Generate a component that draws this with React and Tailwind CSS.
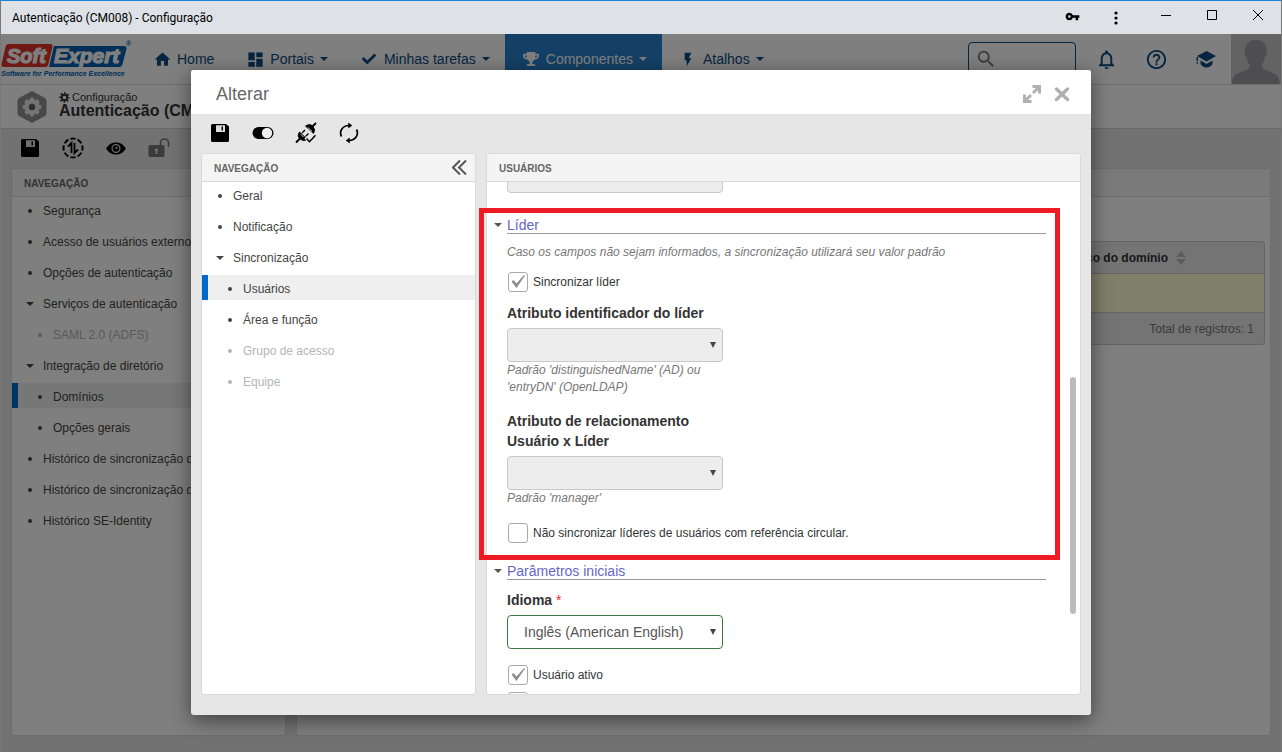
import React, { useState } from 'react';
import { MdVpnKey, MdHome, MdDashboard, MdNotificationsNone, MdHelpOutline, MdSearch, MdFlashOn } from 'react-icons/md';
import { FaCheck, FaTrophy } from 'react-icons/fa';

const pageNav = [
  { label: 'Segurança' },
  { label: 'Acesso de usuários externos' },
  { label: 'Opções de autenticação' },
  { label: 'Serviços de autenticação', open: true },
  { label: 'SAML 2.0 (ADFS)', child: true, disabled: true },
  { label: 'Integração de diretório', open: true },
  { label: 'Domínios', child: true, active: true },
  { label: 'Opções gerais', child: true },
  { label: 'Histórico de sincronização de usuários' },
  { label: 'Histórico de sincronização de domínios' },
  { label: 'Histórico SE-Identity' },
];

const modalNav = [
  { label: 'Geral' },
  { label: 'Notificação' },
  { label: 'Sincronização', open: true },
  { label: 'Usuários', child: true, active: true },
  { label: 'Área e função', child: true },
  { label: 'Grupo de acesso', child: true, disabled: true },
  { label: 'Equipe', child: true, disabled: true },
];

const Caret = ({ className = '' }) => (
  <svg viewBox="0 0 8 4" className={`h-1 w-2 shrink-0 ${className}`} fill="currentColor">
    <path d="M0 0h8L4 4z" />
  </svg>
);

const Gear = ({ className }) => (
  <svg viewBox="0 0 24 24" className={className} fill="none" stroke="currentColor">
    <circle cx="12" cy="12" r="6" strokeWidth="4" />
    <circle cx="12" cy="12" r="9.5" strokeWidth="4" pathLength="16" strokeDasharray="1 1" strokeDashoffset="0.5" />
  </svg>
);

const SaveIcon = () => (
  <svg viewBox="0 0 18 18" className="h-[18px] w-[18px]">
    <path fill="currentColor" d="M1.500 0h13.500l3 2.500v14q0 1.500-1.500 1.500h-15Q0 18 0 16.500v-15Q0 0 1.500 0z" />
    <path fill="#ddd" d="M5 1.200h9V8H5z" />
    <path fill="currentColor" d="M10.500 2.500H12v4h-1.500z" />
    <path fill="currentColor" d="M15 1.500h.8l1.200 1V8h-2z" opacity="0.800" />
  </svg>
);

const SyncIcon = () => (
  <svg viewBox="0 0 22 22" className="h-[22px] w-[22px]" fill="none" stroke="currentColor">
    <circle cx="11" cy="11" r="9.500" strokeWidth="2" pathLength="80" strokeDasharray="7 3" strokeDashoffset="3.500" />
    <path d="M9.500 16V6L6 9.500M12.500 6v10l3.500-3.500" strokeWidth="1.800" />
  </svg>
);

const EyeIcon = () => (
  <svg viewBox="0 0 20 13" className="h-[13px] w-5">
    <path fill="currentColor" fillRule="evenodd" d="M0 6.500C3 2 6 .500 10 .500s7 1.500 10 6c-3 4.500-6 6-10 6s-7-1.500-10-6zM10 2a4.500 4.500 0 100 9 4.500 4.500 0 000-9z" />
    <circle cx="10" cy="6.500" r="3.300" fill="currentColor" />
    <circle cx="10.500" cy="5.800" r="1.100" fill="#ddd" />
  </svg>
);

const UnlockIcon = () => (
  <svg viewBox="0 0 22 20" className="h-5 w-[22px] text-[#777]">
    <path fill="none" stroke="currentColor" strokeWidth="1.600" d="M12.500 8V5a4 4 0 018 0v4" />
    <path fill="currentColor" fillRule="evenodd" d="M2 7h13q1.500 0 1.500 1.500v9q0 1.500-1.500 1.500H2q-1.500 0-1.500-1.500v-9Q.500 7 2 7zm6.500 3.500a1.600 1.600 0 00-.8 3V16h1.600v-2.500a1.600 1.600 0 00-.8-3z" />
  </svg>
);

const ToggleIcon = () => (
  <svg viewBox="0 0 22 14" className="h-3.5 w-[22px]">
    <rect x="0.500" y="1" width="21" height="12" rx="6" fill="currentColor" />
    <circle cx="15" cy="7" r="5.200" fill="#eee" />
  </svg>
);

const PlugIcon = () => (
  <svg viewBox="0 0 22 22" className="h-[22px] w-[22px]" fill="none" stroke="currentColor">
    <path d="M1 20.500l4-4M17 5l4-4" strokeWidth="1.800" />
    <path d="M4.500 10l8 7.500q-4 2.500-7.500-.500t-.500-7z" fill="currentColor" strokeWidth="0.800" />
    <path d="M10.500 4l8 7.500q2.500-3.500-.500-7t-7.500-.500z" fill="currentColor" strokeWidth="0.800" />
    <path d="M7 11l3-3M10.500 14.500l3-3" strokeWidth="1.400" />
    <path d="M13 5.500l4 3.800M6 12.500l2.500 2.500" stroke="#e6e6e6" strokeWidth="0.900" />
    <path d="M10.500 15.500l4 4.500 6.500-7" stroke="#e6e6e6" strokeWidth="3" />
    <path d="M11.500 16.500l3 3.200 6-6.500" strokeWidth="1.500" />
  </svg>
);

const RefreshIcon = () => (
  <svg viewBox="0 0 20 22" className="h-[22px] w-5" fill="none" stroke="currentColor" strokeWidth="1.700">
    <path d="M2.500 14.500C-.300 9 3.800 3.500 10 3.500M17.500 7.500c2.800 5.500-1.300 11-7.500 11" />
    <path d="M9.500 1l3.500 2.500L9.500 6zM10.500 16L7 18.500l3.500 2.500z" fill="currentColor" strokeWidth="0.500" />
  </svg>
);

const Logo = () => (
  <svg viewBox="0 0 135 50" className="h-[50px] w-[135px]" fontFamily="Liberation Sans, Arial, sans-serif" fontWeight="bold" fontStyle="italic">
    <path d="M8 10h41q3 0 2.500 3l-4 17q-.500 3-3.500 3H3q-3 0-2.500-3l4-17q.500-3 3.500-3z" fill="#e03327" />
    <path d="M53 12h70q3 0 2.500 3l-4 15q-.500 3-3.500 3H48z" fill="#0060b0" />
    <text x="6" y="29" fontSize="20" fill="#fff" stroke="#fff" strokeWidth="1.200">Soft</text>
    <text x="53" y="29" fontSize="21" fill="#fff" stroke="#fff" strokeWidth="1.200">Expert</text>
    <text x="0" y="42" fontSize="7" fill="#0060b0">Software for Performance Excellence</text>
    <text x="125" y="12" fontSize="7" fontStyle="normal" fill="#0060b0">®</text>
  </svg>
);

const NavLink = ({ icon, label, caret, active }) => (
  <a
    href="#"
    className={`flex h-full items-center pl-[18px] pr-[15px] ${active ? 'bg-[#2880ce] text-white' : 'text-[#0b4a82]'}`}
  >
    <span className="mr-[7px] flex w-4 justify-center">{icon}</span>
    {label}
    {caret && <Caret className="ml-1.5" />}
  </a>
);

const IconButton = ({ label, children }) => (
  <button type="button" aria-label={label} className="flex h-full w-[43px] items-center justify-center pb-px text-black">
    {children}
  </button>
);

const Panel = ({ title, action, className = '', children }) => (
  <section className={`flex min-h-0 flex-col overflow-hidden rounded-[3px] border border-[#dadada] bg-white ${className}`}>
    <header className="flex h-7 shrink-0 items-center justify-between border-b border-[#dadada] bg-[#f4f4f4] pl-3 pr-2">
      <h2 className="pt-0.5 text-[10px] font-bold text-[#666]">{title}</h2>
      {action}
    </header>
    {children}
  </section>
);

const NavTree = ({ items }) => (
  <ul className="flex flex-col gap-1.5 overflow-hidden">
    {items.map((item, i) => (
      <li key={i}>
        <a
          href="#"
          className={`flex h-[25px] items-center whitespace-nowrap border-l-[6px] pt-0.5 text-xs ${
            item.active ? 'border-[#0068c8] bg-[#efefef]' : 'border-transparent'
          } ${item.disabled ? 'text-[#b5b5b5]' : 'text-[#444]'} ${item.child ? 'pl-[17px]' : 'pl-[7px]'}`}
        >
          <span className="flex w-[18px] shrink-0 items-center pl-px">
            {item.open ? <Caret /> : <span className="ml-0.5 h-1 w-1 rounded-full bg-current" />}
          </span>
          {item.label}
        </a>
      </li>
    ))}
  </ul>
);

const SectionTitle = ({ children }) => (
  <div className="flex h-[18px] items-center">
    <Caret className="mr-[5px] text-[#555]" />
    <h3 className="h-full flex-1 border-b border-[#999] text-sm leading-[18px] text-[#6666c8]">{children}</h3>
  </div>
);

const SelectField = ({ id, label, required, hint, options = [], valid }) => (
  <div className="w-[216px]">
    <label htmlFor={id} className="block text-sm font-bold leading-5 text-[#333]">
      {label}
      {required && <span className="font-normal text-[#f0283c]"> *</span>}
    </label>
    <div className="relative mt-[5px]">
      <select
        id={id}
        disabled={!valid}
        className={`block h-[34px] w-full appearance-none rounded border px-4 text-sm text-[#555] opacity-100 ${
          valid ? 'border-[#3c763d] bg-white' : 'border-[#c8c8c8] bg-[#ededed]'
        }`}
      >
        {options.map((o) => (
          <option key={o}>{o}</option>
        ))}
      </select>
      <svg viewBox="0 0 6 6" className="pointer-events-none absolute right-[7px] top-3.5 h-1.5 w-1.5" fill="#444">
        <path d="M0 0h6L3 6z" />
      </svg>
    </div>
    {hint && <p className="text-xs italic leading-[17px] text-[#777]">{hint}</p>}
  </div>
);

const CheckField = ({ label, defaultChecked = false }) => {
  const [checked, setChecked] = useState(defaultChecked);

  return (
    <label className="relative ml-px flex h-5 items-center text-xs text-[#333]">
      <input
        type="checkbox"
        checked={checked}
        onChange={(e) => setChecked(e.target.checked)}
        className="mr-[5px] h-5 w-5 appearance-none rounded-[3px] border border-[#aaa] bg-white"
      />
      {checked && (
        <svg viewBox="0 0 20 20" className="pointer-events-none absolute left-0 top-0 h-5 w-5" fill="#8c8c8c">
          <path d="M3.500 9.500l2-1.500 3 3.500L16 3l1 .500L8.500 16z" />
        </svg>
      )}
      {label}
    </label>
  );
};

const TitleBar = () => (
  <div className="flex h-[34px] shrink-0 items-center border-t border-[#1883d7] bg-[#dee1e6] text-black">
    <h1 className="ml-[11px] flex-1 font-[Roboto,sans-serif] text-xs">Autenticação (CM008) - Configuração</h1>
    <button type="button" aria-label="Senhas" className="flex h-full w-11 items-center justify-center pb-0.5">
      <MdVpnKey size={15} />
    </button>
    <button type="button" aria-label="Menu" className="mr-[5px] flex h-full w-11 items-center justify-center">
      <svg viewBox="0 0 4 14" className="h-3.5 w-1">
        <circle cx="2" cy="2" r="1.600" />
        <circle cx="2" cy="7" r="1.600" />
        <circle cx="2" cy="12" r="1.600" />
      </svg>
    </button>
    {[
      ['Minimizar', 'M0 5.500h10'],
      ['Maximizar', 'M.500 .500h9v9h-9z'],
      ['Fechar', 'M0 0l10 10M10 0L0 10'],
    ].map(([label, d]) => (
      <button key={label} type="button" aria-label={label} className="flex h-full w-[46px] items-center justify-center pb-1.5">
        <svg viewBox="0 0 10 10" className="h-2.5 w-2.5 overflow-visible" fill="none" stroke="#000">
          <path d={d} />
        </svg>
      </button>
    ))}
  </div>
);

const PageHeader = () => (
  <header className="flex h-[51px] shrink-0 items-center border-b border-[#dadada] bg-white text-sm">
    <Logo />
    <nav className="flex h-full flex-1">
      <NavLink icon={<MdHome size={19} className="shrink-0" />} label="Home" />
      <NavLink icon={<MdDashboard size={19} className="shrink-0" />} label="Portais" caret />
      <NavLink icon={<FaCheck size={14} />} label="Minhas tarefas" caret />
      <NavLink icon={<FaTrophy size={16} />} label="Componentes" caret active />
      <NavLink icon={<MdFlashOn size={17} />} label="Atalhos" caret />
    </nav>
    <div className="flex items-center text-[#0b4a82]">
      <label className="flex h-[34px] w-[108px] items-center rounded border border-current pl-1.5">
        <MdSearch size={22} className="shrink-0 text-[#777]" />
        <input type="text" aria-label="Pesquisar" className="w-full min-w-0 bg-transparent outline-none" />
      </label>
      <button type="button" aria-label="Notificações" className="ml-[5px] flex w-[50px] justify-center">
        <MdNotificationsNone size={23} />
      </button>
      <button type="button" aria-label="Ajuda" className="flex w-[50px] justify-center">
        <MdHelpOutline size={23} />
      </button>
      <button type="button" aria-label="Treinamento" className="flex w-[50px] justify-center">
        <svg viewBox="0 0 20 17" className="h-[17px] w-5" fill="currentColor">
          <path d="M10.500 0L20 5l-9.500 5.500L1 5zM4.500 9.500l6 3.500 6-3.500V13q-2.500 3.500-6 3.500T4.500 13zM.500 6H2v4H.500zM.500 11H2v1.500H.500z" />
        </svg>
      </button>
      <button type="button" aria-label="Perfil" className="h-[50px] w-[50px] bg-[#c6c6c6]">
        <svg viewBox="0 0 50 50" className="h-[50px] w-[50px]" fill="#9c9ca0">
          <path d="M1 50v-3q1-6 7-8l7-3q4-2 4-5-3-3-3.500-8-2-1-1.500-4.500Q14 6 25 6t10.500 12.500q.500 3.500-1.500 4.500-.500 5-3.500 8 0 3 4 5l7 3q6 2 7 8v3z" />
        </svg>
      </button>
    </div>
  </header>
);

const DomainTable = () => (
  <table className="w-full border-separate border-spacing-0 overflow-hidden rounded-[3px] border border-[#cacaca] bg-[#e8e8e8] text-xs">
    <thead>
      <tr className="h-[31px]">
        <th className="pr-[78px] font-bold text-[#333]">
          <span className="flex items-center justify-end gap-2">
            Endereço do domínio
            <svg viewBox="0 0 10 14" className="h-3.5 w-2.5" fill="#bbb">
              <path d="M0 6l5-6 5 6zM0 8h10l-5 6z" />
            </svg>
          </span>
        </th>
      </tr>
    </thead>
    <tbody>
      <tr className="h-10">
        <td className="border-y border-[#cacaca] bg-[#fffed4]" />
      </tr>
    </tbody>
    <tfoot>
      <tr className="h-[31px]">
        <td className="pr-2.5 text-right text-[#777]">Total de registros: 1</td>
      </tr>
    </tfoot>
  </table>
);

const EditDialog = () => (
  <div
    role="dialog"
    aria-label="Alterar"
    className="flex h-full w-full max-w-[900px] flex-col overflow-hidden rounded-[3px] bg-[#e6e6e6] shadow-[0_5px_20px_rgba(0,0,0,0.5)]"
  >
    <header className="flex h-11 shrink-0 items-center justify-between bg-white pl-[25px] pr-5 pt-[3px] text-[#b0b0b0]">
      <h2 className="text-lg text-[#666]">Alterar</h2>
      <div className="flex items-center gap-3">
        <button type="button" aria-label="Expandir">
          <svg viewBox="0 0 18 18" className="block h-[18px] w-[18px]" fill="none" stroke="currentColor" strokeWidth="3">
            <path d="M9.500 1.500h7v7M16 2l-6 6M8.500 16.500h-7v-7M2 16l6-6" />
          </svg>
        </button>
        <button type="button" aria-label="Fechar">
          <svg viewBox="0 0 18 18" className="block h-[18px] w-[18px]" fill="none" stroke="currentColor" strokeWidth="3.500" strokeLinecap="round">
            <path d="M3.500 4l11 10.500M14.500 4l-11 10.500" />
          </svg>
        </button>
      </div>
    </header>

    <div className="flex h-[39px] shrink-0 pl-[7px]">
      <IconButton label="Salvar"><SaveIcon /></IconButton>
      <IconButton label="Habilitar"><ToggleIcon /></IconButton>
      <IconButton label="Testar conexão"><PlugIcon /></IconButton>
      <IconButton label="Sincronizar"><RefreshIcon /></IconButton>
    </div>

    <div className="flex min-h-0 flex-1 gap-2.5 px-2.5 pb-5">
      <Panel
        title="NAVEGAÇÃO"
        className="w-[275px] shrink-0"
        action={
          <button type="button" aria-label="Recolher">
            <svg viewBox="0 0 15 15" className="h-[15px] w-[15px]" fill="none" stroke="#555" strokeWidth="2">
              <path d="M8 .500l-7 7 7 7M14 .500l-7 7 7 7" />
            </svg>
          </button>
        }
      >
        <NavTree items={modalNav} />
      </Panel>

      <div className="relative flex min-w-0 flex-1">
        <Panel title="USUÁRIOS" className="flex-1">
          <div className="min-h-0 flex-1 overflow-hidden pl-[7px] pr-[34px]">
            <select disabled aria-label="Atributo" className="-mt-[23px] ml-[13px] block h-[34px] w-[216px] appearance-none rounded border border-[#c8c8c8] bg-[#ededed] opacity-100" />

            <div className="mt-[23px]">
              <SectionTitle>Líder</SectionTitle>
            </div>
            <div className="flex flex-col pl-[13px]">
              <p className="mb-[11px] mt-2.5 text-xs italic leading-[17px] text-[#777]">
                Caso os campos não sejam informados, a sincronização utilizará seu valor padrão
              </p>
              <CheckField label="Sincronizar líder" defaultChecked />
              <div className="mb-4 mt-[11px] flex flex-col gap-[15px]">
                <SelectField
                  id="leader-id"
                  label="Atributo identificador do líder"
                  hint="Padrão 'distinguishedName' (AD) ou 'entryDN' (OpenLDAP)"
                />
                <SelectField id="leader-rel" label="Atributo de relacionamento Usuário x Líder" hint="Padrão 'manager'" />
              </div>
              <CheckField label="Não sincronizar líderes de usuários com referência circular." />
            </div>

            <div className="mt-[19px]">
              <SectionTitle>Parâmetros iniciais</SectionTitle>
            </div>
            <div className="flex flex-col pl-[13px]">
              <div className="mb-4 mt-2.5">
                <SelectField id="language" label="Idioma" required valid options={['Inglês (American English)']} />
              </div>
              <div className="flex flex-col gap-[7px]">
                <CheckField label="Usuário ativo" defaultChecked />
                <CheckField label="" />
              </div>
            </div>
          </div>
        </Panel>
        <div className="absolute right-[5px] top-[224px] h-[237px] w-1.5 rounded-full bg-[#bbb]" />
        <div className="pointer-events-none absolute -left-[7px] right-[21px] top-[55px] h-[352px] border-[5px] border-[#ed1c24]" />
      </div>
    </div>
  </div>
);

export default function App() {
  return (
    <div className="flex h-screen flex-col overflow-hidden border-x border-[#777] font-['Liberation_Sans',Arial,sans-serif]">
      <TitleBar />
      <div className="relative flex min-h-0 flex-1 flex-col bg-[#e5e5e5]">
        <PageHeader />
        <div className="flex h-11 shrink-0 items-center border-b border-[#d0d0d0] bg-white pl-4">
          <svg viewBox="0 0 30 34" className="h-[34px] w-[30px]">
            <path d="M15 1l13 7q1.500 1 1.500 2.500v13q0 1.500-1.500 2.500l-13 7-13-7Q.500 25 .500 23.500v-13Q.500 9 2 8z" fill="#909090" />
            <circle cx="15" cy="17" r="5.500" fill="#606060" stroke="#e8e8e8" strokeWidth="4.500" />
            <circle cx="15" cy="17" r="8" fill="none" stroke="#e8e8e8" strokeWidth="2.500" pathLength="16" strokeDasharray="1.200 0.800" strokeDashoffset="0.600" />
          </svg>
          <div className="ml-3 pb-[3px] text-[#333]">
            <p className="flex items-center gap-0.5 text-[11px] leading-3">
              <Gear className="h-[11px] w-[11px]" />
              Configuração
            </p>
            <p className="text-base font-bold leading-4">Autenticação (CM008)</p>
          </div>
        </div>

        <div className="flex h-[39px] shrink-0 pl-[7px]">
          <IconButton label="Salvar"><SaveIcon /></IconButton>
          <IconButton label="Sincronizar"><SyncIcon /></IconButton>
          <IconButton label="Visualizar"><EyeIcon /></IconButton>
          <IconButton label="Desbloquear"><UnlockIcon /></IconButton>
        </div>

        <main className="flex min-h-0 flex-1 gap-2.5 px-2.5 pb-4">
          <Panel title="NAVEGAÇÃO" className="w-[275px] shrink-0">
            <NavTree items={pageNav} />
          </Panel>
          <Panel className="flex-1">
            <div className="px-[5px] pt-11">
              <DomainTable />
            </div>
          </Panel>
        </main>

        <div className="absolute inset-0 flex justify-center bg-black/50 pb-[37px] pt-9">
          <EditDialog />
        </div>
      </div>
    </div>
  );
}
